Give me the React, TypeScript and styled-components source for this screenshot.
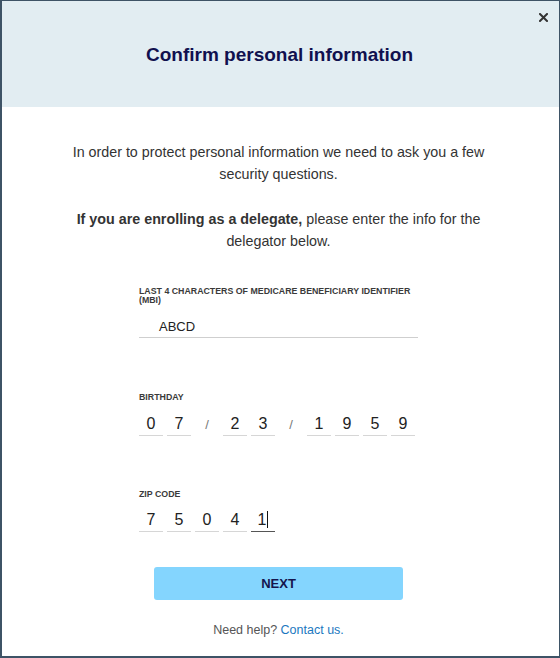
import React from 'react'
import styled, { createGlobalStyle } from 'styled-components'

const GlobalStyle = createGlobalStyle`
  html, body {
    margin: 0;
    padding: 0;
    background: #ffffff;
  }
  body {
    font-family: "Liberation Sans", Arial, sans-serif;
  }
`

const Window = styled.div`
  box-sizing: border-box;
  width: 560px;
  height: 658px;
  border: 1px solid #3e5366;
  border-left-width: 2px;
  border-bottom-width: 2px;
  background: #ffffff;
  display: flex;
  flex-direction: column;
  position: relative;
`

const Header = styled.header`
  height: 106px;
  padding-right: 2px;
  background: #e2edf2;
  display: flex;
  align-items: center;
  justify-content: center;
`

const Title = styled.h1`
  margin: 2px 0 0;
  font-size: 19px;
  font-weight: bold;
  color: #10104f;
`

const CloseButton = styled.button`
  position: absolute;
  top: 10px;
  right: 10px;
  width: 12px;
  height: 12px;
  padding: 0;
  border: 0;
  background: transparent;
  display: flex;
  align-items: center;
  justify-content: center;
  cursor: pointer;
`

const Body = styled.main`
  padding: 34px 62px 0 58px;
  display: flex;
  flex-direction: column;
  align-items: center;
`

const Paragraph = styled.p<{ $gap?: number }>`
  margin: 0 0 ${p => p.$gap ?? 0}px;
  font-size: 14.3px;
  line-height: 22px;
  color: #333333;
  text-align: center;
`

const Form = styled.form`
  width: 279px;
  margin-top: 35px;
  display: flex;
  flex-direction: column;
`

const Field = styled.div<{ $gap?: number }>`
  display: flex;
  flex-direction: column;
  margin-bottom: ${p => p.$gap ?? 0}px;
`

const Label = styled.label<{ $gap: number }>`
  font-size: 8.8px;
  line-height: 8.5px;
  font-weight: bold;
  color: #3a3a3a;
  text-transform: uppercase;
  margin-bottom: ${p => p.$gap}px;
`

const TextInput = styled.div`
  height: 20px;
  border-bottom: 1px solid #cfcfcf;
  padding-left: 20px;
  font-size: 13px;
  line-height: 20px;
  color: #222222;
`

const DigitRow = styled.div`
  display: flex;
  align-items: flex-end;
  gap: 4px;
`

const DigitBox = styled.div<{ $focused?: boolean }>`
  position: relative;
  width: 24px;
  height: 22px;
  border-bottom: 1px solid ${p => (p.$focused ? '#555555' : '#d6d6d6')};
  font-size: 16px;
  line-height: 22px;
  text-align: center;
  color: #222222;
`

const Caret = styled.span`
  display: inline-block;
  width: 1px;
  height: 17px;
  background: #111111;
  vertical-align: -3px;
  margin-left: 1px;
`

const Slash = styled.span`
  width: 24px;
  height: 22px;
  line-height: 22px;
  text-align: center;
  font-size: 13px;
  color: #777777;
`

const NextButton = styled.button`
  align-self: center;
  width: 249px;
  height: 33px;
  margin-top: 35px;
  border: 0;
  border-radius: 3px;
  background: #84d5fe;
  color: #15154d;
  font-family: "Liberation Sans", Arial, sans-serif;
  font-size: 13px;
  font-weight: bold;
  cursor: pointer;
`

const Help = styled.p`
  margin: 22px 0 0;
  font-size: 12.5px;
  line-height: 16px;
  color: #555555;
  text-align: center;
`

const Link = styled.a`
  color: #1b78c0;
  text-decoration: none;
`

const CloseIcon = () => (
  <svg width="9" height="9" viewBox="0 0 9 9">
    <path d="M1 1 L8 8 M8 1 L1 8" stroke="#333333" strokeWidth="2" strokeLinecap="square" />
  </svg>
)

const birthday = [['0', '7'], ['2', '3'], ['1', '9', '5', '9']]
const zip = ['7', '5', '0', '4', '1']

const App: React.FC = () => {
  return (
    <>
      <GlobalStyle />
      <Window>
        <Header>
          <Title>Confirm personal information</Title>
        </Header>
        <CloseButton aria-label="Close">
          <CloseIcon />
        </CloseButton>
        <Body>
          <Paragraph $gap={23}>
            In order to protect personal information we need to ask you a few
            security questions.
          </Paragraph>
          <Paragraph>
            <strong>If you are enrolling as a delegate,</strong> please enter
            the info for the delegator below.
          </Paragraph>
          <Form onSubmit={e => e.preventDefault()}>
            <Field $gap={55}>
              <Label $gap={13}>
                Last 4 characters of Medicare Beneficiary Identifier (MBI)
              </Label>
              <TextInput>ABCD</TextInput>
            </Field>
            <Field $gap={54}>
              <Label $gap={11}>Birthday</Label>
              <DigitRow>
                {birthday.map((group, gi) => (
                  <React.Fragment key={gi}>
                    {gi > 0 && <Slash>/</Slash>}
                    {group.map((d, di) => (
                      <DigitBox key={di}>{d}</DigitBox>
                    ))}
                  </React.Fragment>
                ))}
              </DigitRow>
            </Field>
            <Field>
              <Label $gap={11}>Zip code</Label>
              <DigitRow>
                {zip.map((d, i) => {
                  const last = i === zip.length - 1
                  return (
                    <DigitBox key={i} $focused={last}>
                      {d}
                      {last && <Caret />}
                    </DigitBox>
                  )
                })}
              </DigitRow>
            </Field>
            <NextButton type="submit">NEXT</NextButton>
          </Form>
          <Help>
            Need help? <Link href="#">Contact us.</Link>
          </Help>
        </Body>
      </Window>
    </>
  )
}

export default App
